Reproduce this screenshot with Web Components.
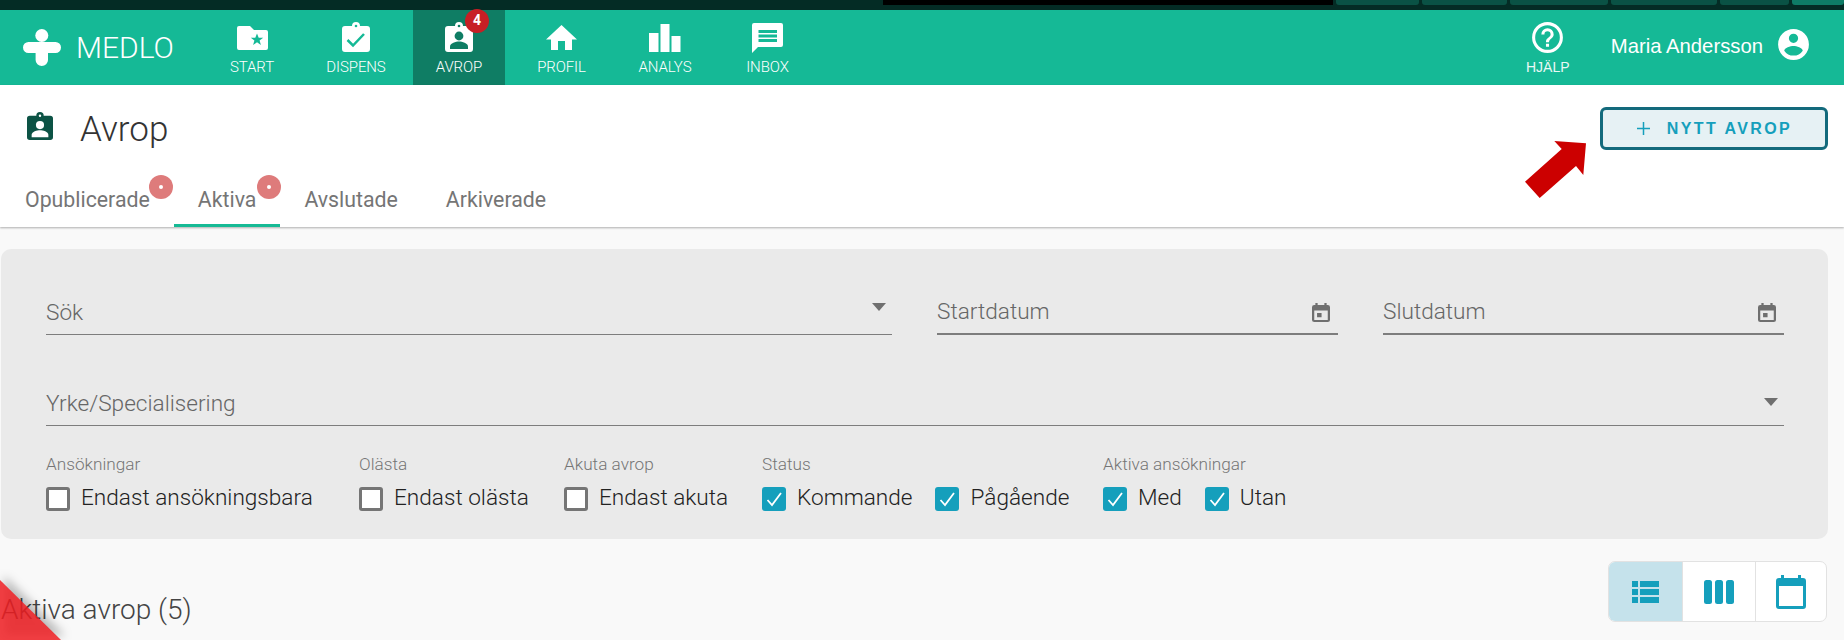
<!DOCTYPE html>
<html lang="sv">
<head>
<meta charset="utf-8">
<title>Medlo</title>
<style>
  html, body { margin: 0; padding: 0; height: 640px; overflow: hidden; background: #f9f9f9; font-family: Roboto, sans-serif; }
</style>
</head>
<body>
<top-strip></top-strip>
<app-nav></app-nav>
<page-head></page-head>
<filter-panel></filter-panel>
<list-head></list-head>
<corner-ribbon></corner-ribbon>

<script>
const BOARD = 'M3 4H10a4 4 0 0 1 8 0h7a3 3 0 0 1 3 3v20a3 3 0 0 1-3 3H3a3 3 0 0 1-3-3V7a3 3 0 0 1 3-3z';
const PERSON = '<circle cx="14" cy="14" r="4.4" fill="var(--on)"/><path d="M5 27v-2.500c0-3.500 6-5 9-5s9 1.500 9 5V27z" fill="var(--on)"/>';
const ICONS = {
  start: '<path d="M2 0h11l4 4h12a2 2 0 0 1 2 2v16a2 2 0 0 1-2 2H2a2 2 0 0 1-2-2V2a2 2 0 0 1 2-2z" fill="#fff"/><path d="M20 7.500l1.700 4.200h4.500l-3.600 2.800 1.300 4.500-3.900-2.700-3.900 2.700 1.300-4.500-3.600-2.800h4.500z" fill="var(--on)"/>',
  dispens: `<path d="${BOARD}" fill="#fff"/><circle cx="14" cy="4" r="1.300" fill="var(--on)"/><path d="M5.500 18l5.500 5.500L22 12" fill="none" stroke="var(--on)" stroke-width="2.500"/>`,
  avrop: `<path d="${BOARD}" fill="#fff"/><circle cx="14" cy="4" r="1.300" fill="var(--on)"/>${PERSON}`,
  profil: '<path d="M15.500 0L31 14.500h-5V25h-7v-9h-7v9H5V14.500H0z" fill="#fff"/>',
  analys: '<path fill="#fff" d="M0 9h9.500v19H0zM11.500 0h9v28h-9zM22.500 12h9v16h-9z"/>',
  inbox: '<path d="M2 0h27a2 2 0 0 1 2 2v20a2 2 0 0 1-2 2H6l-6 6V2a2 2 0 0 1 2-2z" fill="#fff"/><path d="M6.500 7H25v3H6.500zM6.500 11.500H25v3H6.500zM6.500 16H25v3H6.500z" fill="var(--on)"/>'
};

class TopStrip extends HTMLElement {
  constructor() {
    super();
    this.attachShadow({mode: 'open'}).innerHTML = `
      <style>
        :host { display: flex; gap: 3px; height: 10px; background: #042c25; overflow: hidden; }
        .black { width: 450px; height: 5px; margin-left: 883px; background: #000; }
        span { height: 5px; background: #0a5245; border-radius: 0 0 3px 3px; }
      </style>
      <div class="black"></div>
      <span style="width:84px"></span><span style="width:85px"></span><span style="width:98px"></span>
      <span style="width:106px"></span><span style="width:69px"></span><span style="width:52px;background:#0e7c66"></span>`;
  }
}

class NavItem extends HTMLElement {
  constructor() {
    super();
    const badge = this.getAttribute('badge');
    this.attachShadow({mode: 'open'}).innerHTML = `
      <style>
        :host { display: flex; flex-direction: column; align-items: center; justify-content: flex-end; position: relative; height: 75px; color: #fff; --on: #15b996; box-sizing: border-box; padding-bottom: 8px; flex: none; }
        :host([active]) { background: #0f7d64; --on: #0f7d64; }
        .t { font: 300 15px/20px Roboto, sans-serif; letter-spacing: -.1px; white-space: nowrap; }
        .badge { position: absolute; top: -1px; left: 52px; width: 24px; height: 24px; border-radius: 50%; background: #c71f25; color: #fff; font: 700 14px/22px Roboto, sans-serif; text-align: center; }
      </style>
      <slot name="icon"></slot>
      <span class="t"><slot></slot></span>
      ${badge ? `<span class="badge">${badge}</span>` : ''}`;
  }
}

class AppNav extends HTMLElement {
  constructor() {
    super();
    const item = (label, key, w, ml, sw, sh, mb, extra = '') =>
      `<nav-item style="width:${w}px;margin-left:${ml}px" ${extra}><svg slot="icon" width="${sw}" height="${sh}" viewBox="0 0 ${sw} ${sh}" style="display:block;margin-bottom:${mb}px">${ICONS[key]}</svg>${label}</nav-item>`;
    this.attachShadow({mode: 'open'}).innerHTML = `
      <style>
        :host { display: flex; align-items: flex-start; height: 75px; background: #15b996; color: #fff; }
        .logo { display: flex; align-items: center; width: 208px; height: 75px; padding-left: 23px; box-sizing: border-box; gap: 15px; flex: none; }
        .logo span { font: 300 30px/1 Roboto, sans-serif; }
        nav { display: flex; }
        .right { margin-left: auto; display: flex; align-items: flex-start; }
        .help { font-family: "Liberation Sans", sans-serif; font-size: 14px; font-weight: 400; letter-spacing: 0; color: #e9f8f5; }
        .user { display: flex; align-items: center; height: 75px; padding: 0 32px 0 18px; gap: 12px; font: 400 20.300px "Liberation Sans", sans-serif; margin-top: -3px; }
        .user span { margin-top: 4px; }
      </style>
      <div class="logo">
        <svg width="38" height="37" viewBox="0 0 38 37"><circle cx="18.800" cy="6.500" r="6.500" fill="#fff"/><path d="M5.500 13H32.500a5.500 5.500 0 0 1 0 11H25v7a6.200 6 0 0 1-12.400 0v-7H5.500a5.500 5.500 0 0 1 0-11z" fill="#fff"/></svg>
        <span>MEDLO</span>
      </div>
      <nav>
        ${item('START', 'start', 88, 0, 31, 24, 7)}
        ${item('DISPENS', 'dispens', 104, 8, 28, 30, 5)}
        ${item('AVROP', 'avrop', 92, 5, 28, 30, 5, 'active badge="4"')}
        ${item('PROFIL', 'profil', 93, 10, 31, 25, 7)}
        ${item('ANALYS', 'analys', 98, 8, 32, 28, 5)}
        ${item('INBOX', 'inbox', 87, 10, 31, 30, 4)}
      </nav>
      <div class="right">
        <nav-item style="width:90px">
          <svg slot="icon" width="37" height="37" viewBox="0 0 24 24" style="display:block;margin-bottom:1px"><path fill="#fff" d="M11 18h2v-2h-2zm1-16a10 10 0 1 0 0 20 10 10 0 0 0 0-20zm0 18a8 8 0 1 1 0-16 8 8 0 0 1 0 16zm0-14a4 4 0 0 0-4 4h2a2 2 0 1 1 4 0c0 2-3 1.750-3 5h2c0-2.250 3-2.500 3-5a4 4 0 0 0-4-4z"/></svg>
          <span class="help">HJÄLP</span>
        </nav-item>
        <div class="user">
          <span>Maria Andersson</span>
          <svg width="37" height="37" viewBox="0 0 24 24"><path fill="#fff" d="M12 2a10 10 0 1 0 0 20 10 10 0 0 0 0-20zm0 3a3 3 0 1 1 0 6 3 3 0 0 1 0-6zm0 14.200a7.200 7.200 0 0 1-6-3.220c.03-2 4-3.080 6-3.080s5.970 1.090 6 3.080a7.200 7.200 0 0 1-6 3.220z"/></svg>
        </div>
      </div>`;
  }
}

class TabLink extends HTMLElement {
  constructor() {
    super();
    this.attachShadow({mode: 'open'}).innerHTML = `
      <style>
        :host { display: block; position: relative; box-sizing: border-box; height: 50px; padding: 0 24px; font: 400 21.300px/46px Roboto, sans-serif; color: #757575; white-space: nowrap; }
        :host([active]) { border-bottom: 3px solid #16ba95; }
      </style>
      <slot></slot>`;
  }
}

class PageHead extends HTMLElement {
  constructor() {
    super();
    this.attachShadow({mode: 'open'}).innerHTML = `
      <style>
        :host { display: block; height: 142px; background: #fff; box-shadow: 0 1px 2px rgba(0,0,0,.3); position: relative; }
        .top { display: flex; align-items: flex-start; height: 92px; }
        .ttl { display: flex; align-items: center; height: 82px; padding-left: 27px; }
        h1 { margin: 6px 0 0 27px; font: 300 35px/1 Roboto, sans-serif; color: #333; }
        .btn { margin: 22px 16px 0 auto; width: 228px; height: 43px; box-sizing: border-box; border: 3px solid #136a7c; border-radius: 6px; background: #e6f1f4; color: #159fbc; display: flex; align-items: center; justify-content: center; gap: 16px; font: 700 16px "Liberation Sans", sans-serif; letter-spacing: 2.400px; }
        .arrow { position: absolute; left: 1524px; top: 56px; }
        .tabs { display: flex; height: 50px; padding-left: 1px; }
        .d { position: absolute; top: -2px; width: 24px; height: 24px; border-radius: 50%; background: #de7b7b; }
        .d::after { content: ""; position: absolute; left: 10px; top: 10px; width: 4px; height: 4px; border-radius: 50%; background: #fff; }
      </style>
      <div class="top">
        <div class="ttl">
          <svg width="26" height="28" viewBox="0 0 28 30" style="--on:#fff"><path fill="#0c5345" d="${BOARD}"/><circle cx="14" cy="4" r="1.300" fill="#fff"/>${PERSON}</svg>
          <h1>Avrop</h1>
        </div>
        <div class="btn">
          <svg width="15" height="15" viewBox="0 0 15 15"><path d="M7.500 1v13M1 7.500h13" stroke="#159fbc" stroke-width="1.500"/></svg>
          <span>NYTT AVROP</span>
        </div>
      </div>
      <svg class="arrow" width="63" height="58" viewBox="0 0 63 58"><path d="M30.300 0L62 2.300 59.300 34 52 25 15.700 57 1 40.700 37.700 8z" fill="#cc0000"/></svg>
      <div class="tabs">
        <tab-link>Opublicerade<span class="d" style="left:148px"></span></tab-link>
        <tab-link active>Aktiva<span class="d" style="left:83px"></span></tab-link>
        <tab-link>Avslutade</tab-link>
        <tab-link>Arkiverade</tab-link>
      </div>`;
  }
}

class FilterField extends HTMLElement {
  constructor() {
    super();
    const icon = this.getAttribute('kind') === 'date'
      ? `<svg width="18" height="19" viewBox="0 0 16 18" preserveAspectRatio="none"><path fill="#6f6f6f" d="M3 0h2v2h6V0h2v2h1a2 2 0 0 1 2 2v12a2 2 0 0 1-2 2H2a2 2 0 0 1-2-2V4a2 2 0 0 1 2-2h1zM2 7v9h12V7zm2.500 2.500h4v4h-4z"/></svg>`
      : `<svg width="14" height="8" viewBox="0 0 14 8"><path fill="#6f6f6f" d="M0 0h14L7 8z"/></svg>`;
    this.attachShadow({mode: 'open'}).innerHTML = `
      <style>
        :host { display: flex; align-items: center; justify-content: space-between; box-sizing: border-box; height: 50px; border-bottom: var(--b, 1px) solid #7d7d7d; font: 300 22.600px/1 Roboto, sans-serif; color: #666; padding-right: var(--pr, 6px); }
        span { margin-top: var(--ty, 8px); }
        svg { display: block; margin-top: var(--iy, -6px); }
      </style>
      <span><slot></slot></span>${icon}`;
  }
}

class CheckBox extends HTMLElement {
  constructor() {
    super();
    const on = this.hasAttribute('checked');
    this.attachShadow({mode: 'open'}).innerHTML = `
      <style>
        :host { display: inline-flex; align-items: center; gap: 11px; font: 300 22.600px/24px Roboto, sans-serif; color: #222; white-space: nowrap; }
        .b { width: 24px; height: 24px; box-sizing: border-box; border-radius: 3px; display: block; flex: none; }
        .off { border: 3px solid #757575; background: #fff; }
        .on { background: #159fbc; }
        span:last-child { margin-top: -2px; }
      </style>
      ${on ? `<svg class="b on" viewBox="0 0 24 24"><path d="M5.500 13l4.500 5 9-12" fill="none" stroke="#fff" stroke-width="1.800"/></svg>` : `<span class="b off"></span>`}
      <span><slot></slot></span>`;
  }
}

class CheckGroup extends HTMLElement {
  constructor() {
    super();
    this.attachShadow({mode: 'open'}).innerHTML = `
      <style>
        :host { display: block; flex: none; }
        .l { font: 300 17.200px/20px Roboto, sans-serif; color: #757575; margin-bottom: 13px; white-space: nowrap; }
        .row { display: flex; gap: 23px; }
      </style>
      <div class="l">${this.getAttribute('label')}</div>
      <div class="row"><slot></slot></div>`;
  }
}

class FilterPanel extends HTMLElement {
  constructor() {
    super();
    this.attachShadow({mode: 'open'}).innerHTML = `
      <style>
        :host { display: block; box-sizing: border-box; width: 1827px; height: 290px; margin: 22px 0 0 1px; background: #eaeaea; border-radius: 10px; padding: 36px 44px 0 45px; }
        .r1 { display: grid; grid-template-columns: 846px 401px 401px; gap: 45px; }
        .date { --b: 2px; --iy: 7px; --ty: 7px; --pr: 8px; }
        .r2 { margin-top: 41px; --iy: 2px; }
        .r3 { display: flex; margin-top: 28px; }
      </style>
      <div class="r1">
        <filter-field>Sök</filter-field>
        <filter-field class="date" kind="date">Startdatum</filter-field>
        <filter-field class="date" kind="date">Slutdatum</filter-field>
      </div>
      <div class="r2"><filter-field>Yrke/Specialisering</filter-field></div>
      <div class="r3">
        <check-group label="Ansökningar" style="width:313px"><check-box>Endast ansökningsbara</check-box></check-group>
        <check-group label="Olästa" style="width:205px"><check-box>Endast olästa</check-box></check-group>
        <check-group label="Akuta avrop" style="width:198px"><check-box>Endast akuta</check-box></check-group>
        <check-group label="Status" style="width:341px"><check-box checked>Kommande</check-box><check-box checked>Pågående</check-box></check-group>
        <check-group label="Aktiva ansökningar"><check-box checked>Med</check-box><check-box checked>Utan</check-box></check-group>
      </div>`;
  }
}

class ListHead extends HTMLElement {
  constructor() {
    super();
    this.attachShadow({mode: 'open'}).innerHTML = `
      <style>
        :host { display: flex; align-items: flex-start; justify-content: space-between; margin-top: 22px; }
        h2 { margin: 32px 0 0 1px; font: 300 28px/34px Roboto, sans-serif; color: #444; }
        .views { display: grid; grid-template-columns: 73px 73px 1fr; margin-right: 17px; width: 219px; height: 61px; box-sizing: border-box; border: 1px solid #e2e2e2; border-radius: 7px; background: #fff; overflow: hidden; }
        .views span { display: flex; align-items: center; justify-content: center; border-left: 1px solid #e2e2e2; }
        .views span:first-child { border-left: 0; background: #c5e2eb; }
      </style>
      <h2>Aktiva avrop (5)</h2>
      <div class="views">
        <span><svg width="27" height="22" viewBox="0 0 27 22"><path fill="#159fbc" d="M0 0h6v6H0zM8 0h19v6H8zM0 8h6v6H0zM8 8h19v6H8zM0 16h6v6H0zM8 16h19v6H8z"/></svg></span>
        <span><svg width="30" height="24" viewBox="0 0 30 24"><rect width="8" height="24" rx="2.500" fill="#159fbc"/><rect x="11" width="8" height="24" rx="2.500" fill="#159fbc"/><rect x="22" width="8" height="24" rx="2.500" fill="#159fbc"/></svg></span>
        <span><svg width="30" height="34" viewBox="0 0 30 34"><path fill="#159fbc" d="M5 0h3v3h14V0h3v3h2a3 3 0 0 1 3 3v25a3 3 0 0 1-3 3H3a3 3 0 0 1-3-3V6a3 3 0 0 1 3-3h2zM3 11v20h24V11z"/></svg></span>
      </div>`;
  }
}

class CornerRibbon extends HTMLElement {
  constructor() {
    super();
    this.attachShadow({mode: 'open'}).innerHTML = `
      <style>
        :host { display: block; position: absolute; left: 0; top: 580px; width: 61px; height: 60px; pointer-events: none; }
        svg { display: block; filter: drop-shadow(4px -4px 5px rgba(0,0,0,.3)); overflow: visible; }
      </style>
      <svg width="61" height="60" viewBox="0 0 61 60"><path d="M0 0L61 60H0z" fill="rgb(240,30,35)" fill-opacity=".85"/></svg>`;
  }
}

customElements.define('top-strip', TopStrip);
customElements.define('nav-item', NavItem);
customElements.define('app-nav', AppNav);
customElements.define('tab-link', TabLink);
customElements.define('page-head', PageHead);
customElements.define('filter-field', FilterField);
customElements.define('check-box', CheckBox);
customElements.define('check-group', CheckGroup);
customElements.define('filter-panel', FilterPanel);
customElements.define('list-head', ListHead);
customElements.define('corner-ribbon', CornerRibbon);
</script>
</body>
</html>
